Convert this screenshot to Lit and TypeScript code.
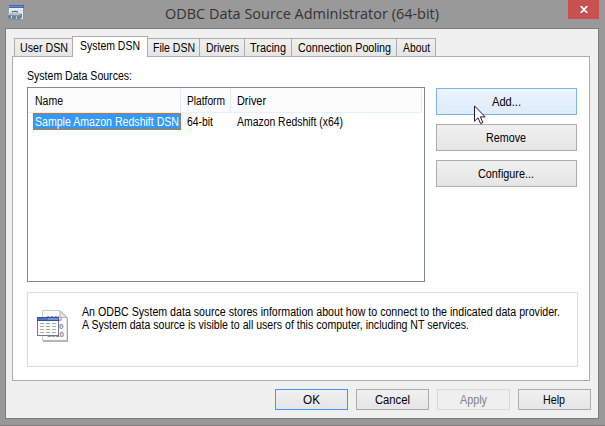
import { LitElement, html, css } from "lit";
import { customElement, property } from "lit/decorators.js";

/** A single line of label text, condensed to an exact advance width. */
@customElement("ui-label")
class UiLabel extends LitElement {
  @property() text = "";
  @property({ type: Number }) w = 50;

  static styles = css`
    :host { display: block; height: 14px; flex: none; }
    svg { display: block; overflow: visible; height: 14px; }
    text { fill: currentColor; font: inherit; }
  `;

  render() {
    return html`<svg width=${this.w} height="14">
      <text x="0" y="11" textLength=${this.w} lengthAdjust="spacingAndGlyphs">${this.text}</text>
    </svg>`;
  }
}

@customElement("push-button")
class PushButton extends LitElement {
  @property() text = "";
  @property({ type: Number }) w = 30;
  @property({ reflect: true }) kind = "normal";

  static styles = css`
    :host { display: block; }
    button {
      box-sizing: border-box; width: 100%; height: 100%; padding: 0 1px 0 0; margin: 0;
      display: flex; align-items: center; justify-content: center;
      border: 1px solid #acacac; border-radius: 0; color: #000;
      background: linear-gradient(#f0f0f0, #e5e5e5);
      font: inherit;
    }
    :host([kind="hot"]) button { border-color: #7eb4ea; background: linear-gradient(#ecf4fc, #dcecfc); }
    :host([kind="default"]) button { border-color: #3c99f5; }
    :host([kind="disabled"]) button { border-color: #d9d9d9; background: #efefef; color: #838383; }
  `;

  render() {
    return html`<button ?disabled=${this.kind === "disabled"}>
      <ui-label .text=${this.text} .w=${this.w}></ui-label>
    </button>`;
  }
}

const appIcon = html`<svg class="app-icon" width="16" height="17" viewBox="0 0 16 17">
  <rect x="1" y="0" width="15" height="14" fill="#e9ecf2" />
  <rect x="1" y="0" width="15" height="3" fill="#3e68ac" />
  <rect x="1" y="1" width="14" height="1" fill="#6a91cd" />
  <path d="M3 5.5H14" stroke="#c9ced8" stroke-dasharray="2 1" />
  <path d="M15.5 3V14" stroke="#8794a5" />
  <path d="M4.5 8.5V6.5H9.5V9" fill="none" stroke="#59646c" />
  <path d="M0 8.5H14V12.5L11 15.5L0 14Z" fill="#7890a1" />
  <path d="M0 8.5L3 7.2L14 8L11 10.3L0 9.8Z" fill="#b2c4ce" />
  <path d="M0 11.5L11 12.5L14 10.5" fill="none" stroke="#5f7485" />
  <path d="M3.5 11V13M8.5 11.5V13.5" stroke="#d9e4e9" />
</svg>`;

const dsnIcon = html`<svg class="dsn-icon" width="32" height="34" viewBox="0 0 32 34">
  <path d="M6 1H24L31 8V32H6Z" fill="#c2c2c2" />
  <path d="M5.5 .5H23L30 7.5V30.5H5.5Z" fill="#fafafa" stroke="#c8c8c8" />
  <path d="M6 31H30.5V8" fill="none" stroke="#a6a6a6" />
  <g class="digits">
    <text x="9" y="11" textLength="16">1010</text>
    <text x="22" y="19">0</text>
    <text x="10" y="27" textLength="17">1010</text>
  </g>
  <path d="M23 1V7.5H30Z" fill="#e6e6e6" stroke="#b7b7b7" />
  <rect x=".5" y="7.5" width="21" height="18" fill="#fcfcfa" stroke="#777b7e" />
  <rect x="0" y="7" width="22" height="4" fill="#31549b" />
  <rect x="1" y="8" width="20" height="2" fill="#7094d6" />
  <rect x="1" y="8" width="10" height="2" fill="#4f76bd" />
  <path d="M3 13.5H20M3 16.5H20M3 19.5H20M3 22.5H20" stroke="#a7aaa7" stroke-dasharray="4 2" />
</svg>`;

const tabs = [
  { text: "User DSN", w: 48, box: 59 },
  { text: "System DSN", w: 60, box: 76 },
  { text: "File DSN", w: 42, box: 53 },
  { text: "Drivers", w: 33, box: 46 },
  { text: "Tracing", w: 36, box: 48 },
  { text: "Connection Pooling", w: 93, box: 106 },
  { text: "About", w: 27, box: 40 },
];

@customElement("app-root")
class AppRoot extends LitElement {
  static styles = css`
    :host {
      display: block; position: relative; box-sizing: border-box;
      width: 605px; height: 426px; overflow: hidden;
      background: #999; border-bottom: 1px solid #7d7779;
      font: 12px "Liberation Sans", Arial, sans-serif; color: #000;
    }
    .titlebar { display: flex; height: 28px; position: relative; justify-content: center; }
    .app-icon { position: absolute; left: 8px; top: 5px; }
    .title { font: 15px "Open Sans", "Noto Sans", sans-serif; padding: 8px 1px 0 0; }
    .title svg { display: block; overflow: visible; }
    .title text { fill: #333; }
    .close {
      position: absolute; right: 6px; top: 0; width: 31px; height: 19px;
      background: #c75050; border: 0; padding: 0;
      display: flex; align-items: center; justify-content: center;
    }
    .close svg { display: block; margin-left: 1px; }
    .client {
      box-sizing: border-box; width: 594px; height: 391px; margin-left: 5px;
      border: 1px solid #7c7c7c; background: #f0f0f0; padding: 7px 0 0 6px;
    }
    .tabs { display: flex; align-items: flex-end; height: 20px; padding-left: 2px; }
    .tab {
      box-sizing: border-box; height: 18px; border: 1px solid #acacac; border-bottom: 0;
      margin-right: -1px; background: linear-gradient(#f0f0f0, #e5e5e5);
      display: flex; justify-content: center; padding-top: 2px; flex: none;
    }
    .tab.active { height: 21px; background: #fff; margin-bottom: -1px; position: relative; }
    .panel {
      box-sizing: border-box; width: 578px; height: 325px;
      border: 1px solid #acacac; background: #fff; padding: 12px 11px 0 14px;
    }
    .caption { height: 18px; }
    .body { display: flex; gap: 11px; }
    .list { box-sizing: border-box; width: 398px; height: 195px; border: 1px solid #828790; padding: 0 2px 0 0; }
    .head { display: flex; height: 24px; background: #fcfcfc; border-bottom: 1px solid #e5f0fc; padding-left: 1px; }
    .head div { box-sizing: border-box; border-right: 1px solid #deebfa; margin-top: 1px; height: 23px; padding: 5px 0 0 6px; }
    .c1 { width: 152px; } .c2 { width: 50px; } .c3 { flex: 1; }
    .row { display: flex; height: 17px; padding-left: 5px; }
    .cell1 {
      box-sizing: border-box; width: 148px; background: #39f; color: #fff;
      border: 1px dotted #c7752b; padding: 1px 0 0 1px;
    }
    .cell { padding: 2px 0 0 6px; width: 44px; }
    .buttons { display: flex; flex-direction: column; gap: 9px; padding-top: 1px; }
    .buttons push-button { width: 141px; height: 27px; }
    .info {
      box-sizing: border-box; width: 551px; height: 75px; margin-top: 10px;
      border: 1px solid #dcdcdc; display: flex; gap: 13px; padding: 12px 0 0 9px;
    }
    .dsn-icon { flex: none; margin-top: 5px; }
    .digits { fill: #8984a6; font: bold 8px "Liberation Sans", sans-serif; }
    .copy ui-label { height: 13px; }
    .footer { display: flex; gap: 8px; padding: 8px 0 0 263px; }
    .footer push-button { width: 73px; height: 21px; }
    .cursor { position: absolute; left: 474px; top: 105px; }
  `;

  label(text: string, w: number) {
    return html`<ui-label .text=${text} .w=${w}></ui-label>`;
  }

  render() {
    return html`
      <div class="titlebar">
        ${appIcon}
        <div class="title"><svg width="274" height="20">
          <text x="0" y="11" textLength="274" lengthAdjust="spacingAndGlyphs">ODBC Data Source Administrator (64-bit)</text>
        </svg></div>
        <button class="close" aria-label="Close">
          <svg width="8" height="7" viewBox="0 0 8 7"><path d="M.7 0L7.3 7M7.3 0L.7 7" stroke="#fff" stroke-width="1.7" /></svg>
        </button>
      </div>
      <div class="client">
        <div class="tabs">
          ${tabs.map((t, i) => html`<div class="tab ${i === 1 ? "active" : ""}" style="width:${t.box}px">${this.label(t.text, t.w)}</div>`)}
        </div>
        <div class="panel">
          <div class="caption">${this.label("System Data Sources:", 105)}</div>
          <div class="body">
            <div class="list">
              <div class="head">
                <div class="c1">${this.label("Name", 28)}</div>
                <div class="c2">${this.label("Platform", 38)}</div>
                <div class="c3">${this.label("Driver", 29)}</div>
              </div>
              <div class="row">
                <div class="cell1">${this.label("Sample Amazon Redshift DSN", 144)}</div>
                <div class="cell">${this.label("64-bit", 26)}</div>
                <div class="cell">${this.label("Amazon Redshift (x64)", 106)}</div>
              </div>
            </div>
            <div class="buttons">
              <push-button text="Add..." .w=${29} kind="hot"></push-button>
              <push-button text="Remove" .w=${40}></push-button>
              <push-button text="Configure..." .w=${56}></push-button>
            </div>
          </div>
          <div class="info">
            ${dsnIcon}
            <div class="copy">
              ${this.label("An ODBC System data source stores information about how to connect to the indicated data provider.", 478)}
              ${this.label("A System data source is visible to all users of this computer, including NT services.", 387)}
            </div>
          </div>
        </div>
        <div class="footer">
          <push-button text="OK" .w=${17} kind="default"></push-button>
          <push-button text="Cancel" .w=${35}></push-button>
          <push-button text="Apply" .w=${27} kind="disabled"></push-button>
          <push-button text="Help" .w=${22}></push-button>
        </div>
      </div>
      <svg class="cursor" width="12" height="20" viewBox="0 0 12 20">
        <path d="M.5 .9V16.2L4 12.8L6.6 18.6L8.9 17.6L6.4 11.9H11.2Z" fill="#fff" stroke="#1c1c38" />
      </svg>
    `;
  }
}
